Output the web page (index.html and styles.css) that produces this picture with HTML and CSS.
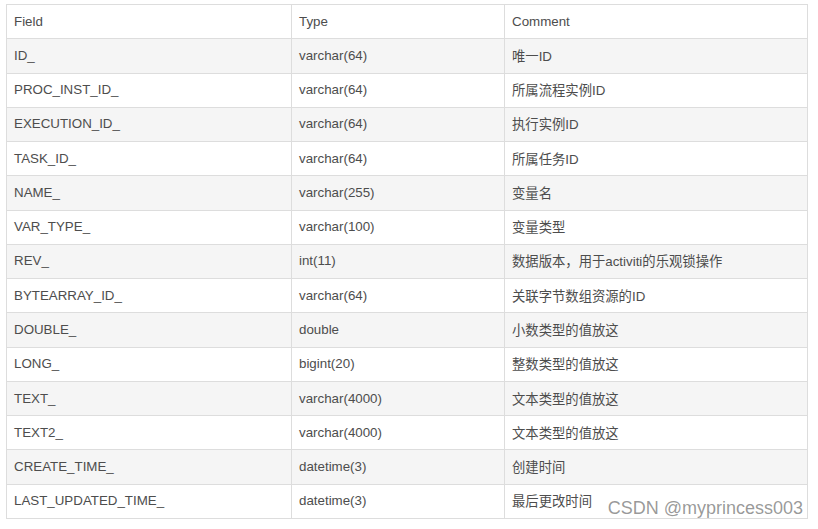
FILE: index.html
```html
<!DOCTYPE html>
<html>
<head>
<meta charset="utf-8">
<link rel="stylesheet" href="styles.css">
</head>
<body>
<div class="wrap">
<table class="tbl">
<thead>
<tr><th class="c1">Field</th><th class="c2">Type</th><th class="c3">Comment</th></tr>
</thead>
<tbody>
<tr><td>ID_</td><td>varchar(64)</td><td>唯一ID</td></tr>
<tr><td>PROC_INST_ID_</td><td>varchar(64)</td><td>所属流程实例ID</td></tr>
<tr><td>EXECUTION_ID_</td><td>varchar(64)</td><td>执行实例ID</td></tr>
<tr><td>TASK_ID_</td><td>varchar(64)</td><td>所属任务ID</td></tr>
<tr><td>NAME_</td><td>varchar(255)</td><td>变量名</td></tr>
<tr><td>VAR_TYPE_</td><td>varchar(100)</td><td>变量类型</td></tr>
<tr><td>REV_</td><td>int(11)</td><td>数据版本，用于activiti的乐观锁操作</td></tr>
<tr><td>BYTEARRAY_ID_</td><td>varchar(64)</td><td>关联字节数组资源的ID</td></tr>
<tr><td>DOUBLE_</td><td>double</td><td>小数类型的值放这</td></tr>
<tr><td>LONG_</td><td>bigint(20)</td><td>整数类型的值放这</td></tr>
<tr><td>TEXT_</td><td>varchar(4000)</td><td>文本类型的值放这</td></tr>
<tr><td>TEXT2_</td><td>varchar(4000)</td><td>文本类型的值放这</td></tr>
<tr><td>CREATE_TIME_</td><td>datetime(3)</td><td>创建时间</td></tr>
<tr><td>LAST_UPDATED_TIME_</td><td>datetime(3)</td><td>最后更改时间</td></tr>
</tbody>
</table>
<div class="mark">CSDN @myprincess003</div>
</div>
</body>
</html>
```
FILE: styles.css
```css
html, body {
  margin: 0;
  padding: 0;
  background: #ffffff;
}
.wrap {
  position: relative;
  width: 818px;
  height: 529px;
  padding: 4px 0 0 6px;
  box-sizing: border-box;
}
.tbl {
  border-collapse: collapse;
  font-family: "Liberation Sans", "Noto Sans CJK SC", sans-serif;
  font-size: 13.33px;
  color: #4d4d4d;
  table-layout: fixed;
  width: 801px;
}
.tbl th, .tbl td {
  border: 1px solid #dddddd;
  text-align: left;
  font-weight: normal;
  padding: 0 0 1px 7px;
  height: 34.27px;
  box-sizing: border-box;
  white-space: nowrap;
}
.c1 { width: 285px; }
.c2 { width: 213px; }
.c3 { width: 303px; }
.tbl tbody tr:nth-child(odd) {
  background: #f5f5f5;
}
.mark {
  position: absolute;
  right: 15px;
  bottom: 10px;
  font-family: "Liberation Sans", Arial, sans-serif;
  font-size: 18px;
  color: rgba(120, 120, 120, 0.75);
}
```
